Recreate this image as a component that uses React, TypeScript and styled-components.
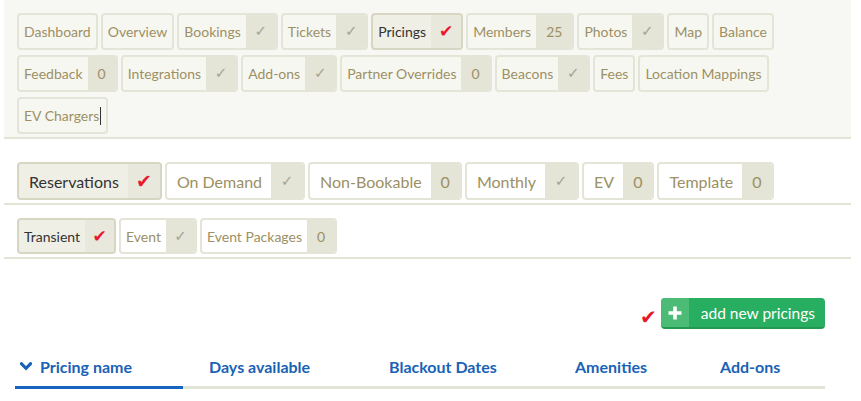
import React from "react";
import styled, { createGlobalStyle, css } from "styled-components";

const Global = createGlobalStyle`
  html, body { margin: 0; padding: 0; background: #ffffff; }
  body { font-family: Lato, "Open Sans", "Liberation Sans", sans-serif; }
  * { box-sizing: border-box; }
`;

const Page = styled.div`
  margin-left: 4px;
  width: 847px;
`;

const TopPanel = styled.div`
  background: #f7f7f3;
  border-bottom: 2px solid #e3e3d6;
  padding: 13px 13px 3px;
  display: flex;
  flex-direction: column;
  gap: 5px;
`;

const Section = styled.div<{ $top: number }>`
  border-bottom: 2px solid #e3e3d6;
  padding: ${(p) => p.$top}px 13px 3px;
`;

const Row = styled.div`
  display: flex;
  gap: 3px;
`;

type Size = "sm" | "lg" | "md";

const Tab = styled.div<{ $active?: boolean; $size: Size; $white?: boolean }>`
  display: flex;
  align-items: stretch;
  height: ${(p) => (p.$size === "lg" ? 38 : p.$size === "md" ? 36 : 37)}px;
  border: 2px solid #e4e4d7;
  border-radius: 4px;
  overflow: hidden;
  background: ${(p) => (p.$white ? "#ffffff" : "#f7f7f2")};
  font-size: ${(p) => (p.$size === "lg" ? 16 : 14)}px;
  color: #9c9064;
  ${(p) =>
    p.$active &&
    css`
      background: #efefe6;
      border-color: #d6d6c2;
      color: #333333;
    `}
`;

const Label = styled.span<{ $size: Size }>`
  display: flex;
  align-items: center;
  padding: 0 ${(p) => (p.$size === "lg" ? 9 : 5)}px 0
    ${(p) => (p.$size === "lg" ? 10 : 5)}px;
  white-space: nowrap;
`;

const Badge = styled.span<{ $active?: boolean; $w?: number }>`
  display: flex;
  align-items: center;
  justify-content: center;
  padding: 0 10px;
  ${(p) =>
    p.$w &&
    css`
      width: ${p.$w}px;
      padding: 0;
    `}
  background: ${(p) => (p.$active ? "#e8e8dc" : "#e4e4d7")};
  color: #9c9064;
  white-space: nowrap;
`;

const Check = styled.span`
  font-family: "DejaVu Sans", sans-serif;
  color: #a4a493;
  font-size: 15px;
  line-height: 1;
`;

const RedCheck = styled.span<{ $big?: boolean }>`
  font-family: "DejaVu Sans", sans-serif;
  color: #e8192c;
  font-size: ${(p) => (p.$big ? 19 : 17)}px;
  line-height: 1;
  font-weight: bold;
`;

const Caret = styled.span`
  display: inline-block;
  width: 1px;
  height: 18px;
  background: #333;
  margin-left: 1px;
`;

const ActionBar = styled.div`
  display: flex;
  justify-content: flex-end;
  align-items: center;
  gap: 4px;
  padding: 39px 26px 0 0;
`;

const OutsideCheck = styled.span`
  font-family: "DejaVu Sans", sans-serif;
  color: #e8192c;
  font-size: 20px;
  line-height: 1;
  font-weight: bold;
  padding-top: 7px;
`;

const AddButton = styled.button`
  display: flex;
  align-items: stretch;
  height: 31px;
  padding: 0;
  border: none;
  border-bottom: 2px solid #22994f;
  border-radius: 4px;
  overflow: hidden;
  background: #27ae60;
  color: #ffffff;
  font-family: Lato, sans-serif;
  font-size: 15.5px;
  cursor: pointer;
`;

const ButtonIcon = styled.span`
  display: flex;
  align-items: center;
  justify-content: center;
  width: 28px;
  background: #4bbb76;
`;

const ButtonText = styled.span`
  display: flex;
  align-items: center;
  padding: 0 10px 0 12px;
`;

const Header = styled.div`
  display: grid;
  grid-template-columns: 168px 180px 186px 145px 131px;
  margin: 21px 26px 0 11px;
`;

const HeaderCell = styled.div<{ $active?: boolean; $first?: boolean }>`
  display: flex;
  align-items: center;
  gap: 8px;
  height: 39px;
  padding: 0 0 3px ${(p) => (p.$first ? 5 : 26)}px;
  border-bottom: 3px solid ${(p) => (p.$active ? "#1565c0" : "#e3e3d6")};
  color: #1a62b4;
  font-weight: 700;
  font-size: 16px;
  white-space: nowrap;
`;

type TabDef = { label: string; badge?: string; active?: boolean; caret?: boolean };

const topRows: TabDef[][] = [
  [
    { label: "Dashboard" },
    { label: "Overview" },
    { label: "Bookings", badge: "check" },
    { label: "Tickets", badge: "check" },
    { label: "Pricings", badge: "check", active: true },
    { label: "Members", badge: "25" },
    { label: "Photos", badge: "check" },
    { label: "Map" },
    { label: "Balance" },
  ],
  [
    { label: "Feedback", badge: "0" },
    { label: "Integrations", badge: "check" },
    { label: "Add-ons", badge: "check" },
    { label: "Partner Overrides", badge: "0" },
    { label: "Beacons", badge: "check" },
    { label: "Fees" },
    { label: "Location Mappings" },
  ],
  [{ label: "EV Chargers", caret: true }],
];

const typeTabs: TabDef[] = [
  { label: "Reservations", badge: "check", active: true },
  { label: "On Demand", badge: "check" },
  { label: "Non-Bookable", badge: "0" },
  { label: "Monthly", badge: "check" },
  { label: "EV", badge: "0" },
  { label: "Template", badge: "0" },
];

const subTabs: TabDef[] = [
  { label: "Transient", badge: "check", active: true },
  { label: "Event", badge: "check" },
  { label: "Event Packages", badge: "0" },
];

const checkWidth: Record<Size, number> = { sm: 30, lg: 32, md: 29 };

function TabItem({ t, size, white }: { t: TabDef; size: Size; white?: boolean }) {
  const isCheck = t.badge === "check";
  return (
    <Tab $active={t.active} $size={size} $white={white && !t.active}>
      <Label $size={size}>
        {t.label}
        {t.caret && <Caret />}
      </Label>
      {t.badge && (
        <Badge $active={t.active} $w={isCheck ? checkWidth[size] : undefined}>
          {isCheck ? (
            t.active ? (
              <RedCheck $big={size === "lg"}>✔</RedCheck>
            ) : (
              <Check>✓</Check>
            )
          ) : (
            t.badge
          )}
        </Badge>
      )}
    </Tab>
  );
}

const Chevron = () => (
  <svg width="12" height="9" viewBox="0 0 12 9">
    <path d="M1.5 1.8 L6 6.3 L10.5 1.8" fill="none" stroke="#1a62b4" strokeWidth="3.2" strokeLinecap="square" />
  </svg>
);

const Plus = () => (
  <svg width="16" height="16" viewBox="0 0 16 16">
    <path d="M8 1.5 V14.5 M1.5 8 H14.5" stroke="#ffffff" strokeWidth="3.6" />
  </svg>
);

export default function App() {
  return (
    <>
      <Global />
      <Page>
        <TopPanel>
          {topRows.map((row, i) => (
            <Row key={i}>
              {row.map((t) => (
                <TabItem key={t.label} t={t} size="sm" />
              ))}
            </Row>
          ))}
        </TopPanel>
        <Section $top={23}>
          <Row>
            {typeTabs.map((t) => (
              <TabItem key={t.label} t={t} size="lg" white />
            ))}
          </Row>
        </Section>
        <Section $top={13}>
          <Row>
            {subTabs.map((t) => (
              <TabItem key={t.label} t={t} size="md" white />
            ))}
          </Row>
        </Section>
        <ActionBar>
          <OutsideCheck>✔</OutsideCheck>
          <AddButton>
            <ButtonIcon>
              <Plus />
            </ButtonIcon>
            <ButtonText>add new pricings</ButtonText>
          </AddButton>
        </ActionBar>
        <Header>
          <HeaderCell $first $active>
            <Chevron />
            Pricing name
          </HeaderCell>
          <HeaderCell>Days available</HeaderCell>
          <HeaderCell>Blackout Dates</HeaderCell>
          <HeaderCell>Amenities</HeaderCell>
          <HeaderCell>Add-ons</HeaderCell>
        </Header>
      </Page>
    </>
  );
}
